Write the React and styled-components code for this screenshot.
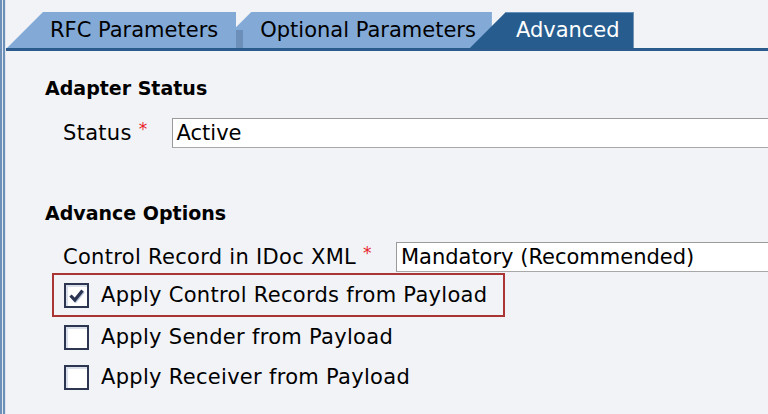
import React from "react";
import styled, { createGlobalStyle } from "styled-components";

const GlobalStyle = createGlobalStyle`
  html, body {
    margin: 0;
    padding: 0;
    width: 768px;
    height: 414px;
    overflow: hidden;
    background: #f2f3f7;
  }
  * { box-sizing: border-box; }
`;

export default function App() {
  return (
    <Frame>
      <GlobalStyle />
      <SideRail />
      <Panel>
        <TabStrip>
          <Tab $pl={43} $pr={18} $z={2}>RFC Parameters</Tab>
          <Tab $pl={45} $pr={16} $ml={-21} $z={1} $notch>Optional Parameters</Tab>
          <Tab $pl={46} $pr={14} $ml={-22} $z={3} $active>Advanced</Tab>
        </TabStrip>

        <Content>
          <SectionTitle>Adapter Status</SectionTitle>
          <FieldRow $mt={18}>
            <Label>Status<Required>*</Required></Label>
            <TextField>Active</TextField>
          </FieldRow>

          <SectionTitle $mt={53}>Advance Options</SectionTitle>
          <FieldRow $mt={17}>
            <Label>Control Record in IDoc XML<Required>*</Required></Label>
            <TextField>Mandatory (Recommended)</TextField>
          </FieldRow>

          <CheckList>
            <CheckRow $highlight>
              <CheckBox $checked>
                <svg width="21" height="21" viewBox="0 0 21 21">
                  <path d="M4.5 10.5 L8.8 15 L16.5 5.5" fill="none" stroke="#b8c6dc" strokeWidth="3" transform="translate(1 1)" />
                  <path d="M4.5 10.5 L8.8 15 L16.5 5.5" fill="none" stroke="#2b3452" strokeWidth="3.2" />
                </svg>
              </CheckBox>
              Apply Control Records from Payload
            </CheckRow>
            <CheckRow>
              <CheckBox />
              Apply Sender from Payload
            </CheckRow>
            <CheckRow>
              <CheckBox />
              Apply Receiver from Payload
            </CheckRow>
          </CheckList>
        </Content>
      </Panel>
    </Frame>
  );
}

const Frame = styled.div`
  display: flex;
  width: 768px;
  height: 414px;
  overflow: hidden;
  background: #f2f3f7;
  font-family: "DejaVu Sans", "Liberation Sans", sans-serif;
  color: #000;
`
const SideRail = styled.div`
  flex: 0 0 6px;
  background: linear-gradient(
    to right,
    #6d90b8 0px, #6d90b8 2px,
    #e3e9f1 2px, #e3e9f1 3px,
    #6d90b8 3px, #6d90b8 5px,
    #dfe5ee 5px, #dfe5ee 6px
  );
`
const Panel = styled.div`
  flex: 1;
  display: flex;
  flex-direction: column;
  min-width: 0;
`
const TabStrip = styled.div`
  display: flex;
  align-items: flex-end;
  padding: 12px 0 0 1px;
  border-bottom: 3px solid #2a5b8c;
`
const Tab = styled.div`
  position: relative;
  z-index: ${(p) => p.$z};
  height: 36px;
  line-height: 36px;
  margin-left: ${(p) => p.$ml || 0}px;
  padding: 0 ${(p) => p.$pr}px 0 ${(p) => p.$pl}px;
  background: ${(p) => (p.$active ? "#275c8e" : "#83aad7")};
  color: ${(p) => (p.$active ? "#fff" : "#000")};
  box-shadow: ${(p) => (p.$active ? "inset 0 1px 0 #6590b8" : "none")};
  font-size: 21px;
  white-space: nowrap;
  clip-path: polygon(36px 0, 100% 0, 100% 100%, 0 100%);

  &::before {
    content: "";
    display: ${(p) => (p.$notch ? "block" : "none")};
    position: absolute;
    left: 21px;
    top: 18px;
    width: 7px;
    height: 18px;
    background: #6b8fb9;
  }
`
const Content = styled.div`
  display: flex;
  flex-direction: column;
  padding: 25px 0 0 39px;
`
const SectionTitle = styled.div`
  margin-top: ${(p) => p.$mt || 0}px;
  height: 24px;
  line-height: 24px;
  font-size: 19px;
  font-weight: bold;
  white-space: nowrap;
`
const FieldRow = styled.div`
  display: flex;
  align-items: center;
  margin-top: ${(p) => p.$mt || 0}px;
  padding-left: 18px;
  height: 30px;
`
const Label = styled.div`
  display: flex;
  align-items: flex-start;
  font-size: 21px;
  line-height: 30px;
  letter-spacing: 0.3px;
  white-space: nowrap;
  margin-right: 24px;
`
const Required = styled.span`
  color: #e8242a;
  font-size: 17px;
  line-height: 22px;
  margin-left: 7px;
`
const TextField = styled.div`
  flex: 1;
  height: 30px;
  line-height: 28px;
  margin-right: -20px;
  padding-left: 4px;
  background: #fff;
  border: 1px solid #9a9a9a;
  border-bottom-color: #a8a8a8;
  font-size: 21px;
  white-space: nowrap;
`
const CheckList = styled.div`
  display: flex;
  flex-direction: column;
  align-items: flex-start;
  margin: 1px 0 0 7px;
`
const CheckRow = styled.div`
  display: flex;
  align-items: center;
  gap: 12px;
  height: ${(p) => (p.$highlight ? 44 : 40)}px;
  padding: 0 16px 0 ${(p) => (p.$highlight ? 10 : 12)}px;
  border: ${(p) => (p.$highlight ? "2px solid #ab3434" : "none")};
  font-size: 21px;
  letter-spacing: 0.3px;
  white-space: nowrap;
`
const CheckBox = styled.div`
  flex: 0 0 25px;
  width: 25px;
  height: 25px;
  border: 2px solid #2d3650;
  background: #fff;
  box-shadow: inset 2px 2px 0 #d9e0ec;
  display: flex;
  align-items: center;
  justify-content: center;
`
